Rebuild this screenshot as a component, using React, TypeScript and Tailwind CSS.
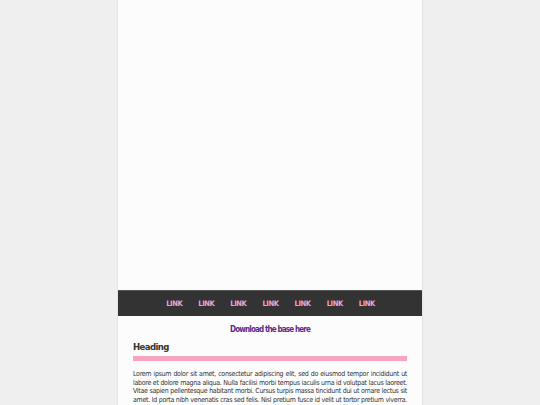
export default function App() {
  const links = ['LINK', 'LINK', 'LINK', 'LINK', 'LINK', 'LINK', 'LINK'];

  return (
    <div className="min-h-screen bg-[#efefef] flex justify-center [font-family:'DejaVu_Sans_Condensed','DejaVu_Sans',sans-serif]">
      <div className="w-[304px] bg-[#fcfcfc] shadow-[0_0_2px_rgba(0,0,0,0.12)]">
        {/* Header area */}
        <div className="h-[290px]" />

        {/* Nav */}
        <nav className="h-[26px] bg-[#333333] border-t border-[#555] flex items-center justify-center gap-[16px] pl-[1px]">
          {links.map((l, i) => (
            <a key={i} href="#" className="text-[7.5px] font-bold tracking-[-0.4px] text-[#f4a6cb]">
              {l}
            </a>
          ))}
        </nav>

        <div className="px-[15px]">
          <p className="text-center mt-[8px] text-[8px] font-bold tracking-[-0.85px] text-[#5b2a8e] leading-[11px]">
            Download the base here
          </p>

          <h2 className="mt-[6px] text-[9.5px] font-bold tracking-[-0.6px] text-[#333] leading-[12px]">Heading</h2>
          <div className="mt-[3px] h-[5px] bg-[#f9a3c3]" />

          <p className="mt-[9px] text-[7px] tracking-[-0.3px] leading-[8.5px] text-[#333] text-justify">
            Lorem ipsum dolor sit amet, consectetur adipiscing elit, sed do eiusmod tempor incididunt ut
            labore et dolore magna aliqua. Nulla facilisi morbi tempus iaculis urna id volutpat lacus laoreet.
            Vitae sapien pellentesque habitant morbi. Cursus turpis massa tincidunt dui ut ornare lectus sit
            amet. Id porta nibh venenatis cras sed felis. Nisl pretium fusce id velit ut tortor pretium viverra.
            Suspendisse potenti nullam ac tortor vitae purus faucibus ornare suspendisse.
          </p>
        </div>
      </div>
    </div>
  );
}
